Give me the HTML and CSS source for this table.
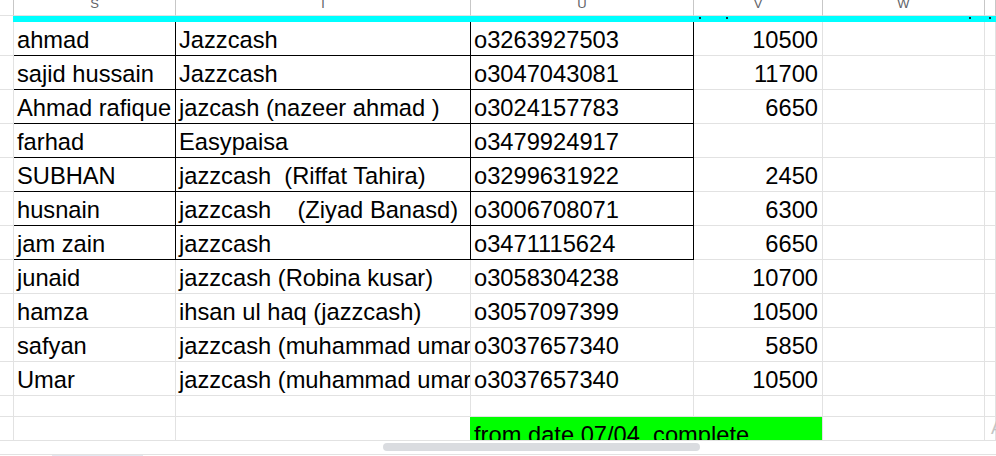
FILE: index.html
```html
<!DOCTYPE html>
<html>
<head>
<meta charset="utf-8">
<link rel="stylesheet" href="styles.css">
</head>
<body>
<div class="app">
  <div class="sheet">
    <div class="grid">
      <div class="c g hd"></div>
      <div class="c hd"><span class="hl">S</span></div>
      <div class="c hd"><span class="hl">T</span></div>
      <div class="c hd"><span class="hl">U</span></div>
      <div class="c hd"><span class="hl">V</span></div>
      <div class="c hd"><span class="hl">W</span></div>
      <div class="c hd"></div>

      <div class="c g cy-g"></div>
      <div class="cyan"><i class="dot d1"></i><i class="dot d2"></i><i class="dot d3"></i><i class="dot d4"></i></div>

      <div class="c g"></div><div class="c b">ahmad</div><div class="c b">Jazzcash</div><div class="c b">o3263927503</div><div class="c n">10500</div><div class="c"></div><div class="c"></div>
      <div class="c g"></div><div class="c b">sajid hussain</div><div class="c b">Jazzcash</div><div class="c b">o3047043081</div><div class="c n">11700</div><div class="c"></div><div class="c"></div>
      <div class="c g"></div><div class="c b">Ahmad rafique</div><div class="c b">jazcash (nazeer ahmad )</div><div class="c b">o3024157783</div><div class="c n">6650</div><div class="c"></div><div class="c"></div>
      <div class="c g"></div><div class="c b">farhad</div><div class="c b">Easypaisa</div><div class="c b">o3479924917</div><div class="c n"></div><div class="c"></div><div class="c"></div>
      <div class="c g"></div><div class="c b">SUBHAN</div><div class="c b">jazzcash  (Riffat Tahira)</div><div class="c b">o3299631922</div><div class="c n">2450</div><div class="c"></div><div class="c"></div>
      <div class="c g"></div><div class="c b">husnain</div><div class="c b">jazzcash    (Ziyad Banasd)</div><div class="c b">o3006708071</div><div class="c n">6300</div><div class="c"></div><div class="c"></div>
      <div class="c g"></div><div class="c b">jam zain</div><div class="c b">jazzcash</div><div class="c b">o3471115624</div><div class="c n">6650</div><div class="c"></div><div class="c"></div>
      <div class="c g"></div><div class="c">junaid</div><div class="c">jazzcash (Robina kusar)</div><div class="c">o3058304238</div><div class="c n">10700</div><div class="c"></div><div class="c"></div>
      <div class="c g"></div><div class="c">hamza</div><div class="c">ihsan ul haq (jazzcash)</div><div class="c">o3057097399</div><div class="c n">10500</div><div class="c"></div><div class="c"></div>
      <div class="c g"></div><div class="c">safyan</div><div class="c">jazzcash (muhammad umar)</div><div class="c">o3037657340</div><div class="c n">5850</div><div class="c"></div><div class="c"></div>
      <div class="c g"></div><div class="c">Umar</div><div class="c">jazzcash (muhammad umar)</div><div class="c">o3037657340</div><div class="c n">10500</div><div class="c"></div><div class="c"></div>
      <div class="c g"></div><div class="c"></div><div class="c"></div><div class="c"></div><div class="c"></div><div class="c"></div><div class="c"></div>
      <div class="c g"></div><div class="c"></div><div class="c to-green"></div><div class="c green">from date 07/04  complete</div><div class="c"></div><div class="c"></div>
    </div>
    <div class="wm">A<br>G</div>
  </div>
  <div class="hscroll"><div class="thumb"></div></div>
  <div class="tabs"><div class="tab"></div></div>
</div>
</body>
</html>
```
FILE: styles.css
```css
* { box-sizing: border-box; }
html, body { margin: 0; padding: 0; background: #fff; }
body { width: 996px; height: 456px; overflow: hidden; font-family: "Liberation Sans", Arial, sans-serif; }
.app { display: flex; flex-direction: column; height: 456px; }
.sheet { position: relative; height: 441px; overflow: hidden; border-bottom: 1px solid #e2e2e2; }
.grid {
  display: grid;
  grid-template-columns: 14px 162px 295px 223px 129px 162px 11px;
  grid-template-rows: 16px 6px repeat(11, 34px) 21px 34px;
}
.c {
  border-right: 1px solid #e2e2e2;
  border-bottom: 1px solid #e2e2e2;
  overflow: hidden;
  white-space: pre;
  font-size: 23.7px;
  line-height: 27px;
  color: #000;
  padding: 0 4px 1px 3px;
  display: flex;
  align-items: flex-end;
}
.c.hd {
  border-right-color: #c7c7c7;
  border-bottom-color: #e2e2e2;
  justify-content: center;
  align-items: flex-start;
  padding: 0;
}
.hl { font-size: 13px; line-height: 13px; color: #5f6368; margin-top: -3px; }
.c.g { padding: 0; }
.c.cy-g { border-right-color: #00ffff; border-bottom: 0; }
.cyan { grid-column: 2 / -1; background: #00ffff; position: relative; }
.dot { position: absolute; top: 1px; width: 2px; height: 2px; background: #1a2a3a; }
.d1 { left: 685px; } .d2 { left: 712px; } .d3 { left: 955px; } .d4 { left: 975px; }
.c.b { border-right-color: #000; border-bottom-color: #000; }
.c.n { justify-content: flex-end; }
.c.to-green { border-right-color: #00ff00; }
.c.green { grid-column: span 2; background: #00ff00; }
.wm { position: absolute; left: 991px; top: 414px; font-size: 18px; line-height: 28px; color: #c4c4c4; }
.hscroll { height: 13px; position: relative; }
.thumb { margin: 2px 0 0 383px; width: 317px; height: 8px; border-radius: 4px; background: #dadce0; }
.tabs { flex: 1; border-top: 1px solid #e2e2e2; }
.tab { margin-left: 52px; width: 91px; height: 100%; background: #e3e8f1; }
```
